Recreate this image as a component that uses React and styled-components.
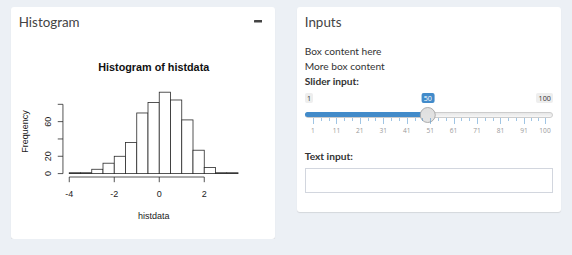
import React from "react";
import styled, { createGlobalStyle } from "styled-components";

const Global = createGlobalStyle`
  html, body { margin: 0; padding: 0; }
  body {
    background: #ecf0f5;
    font-family: Lato, "Open Sans", "Liberation Sans", sans-serif;
    color: #333;
  }
  * { box-sizing: border-box; }
`;

const Page = styled.div`
  display: grid;
  grid-template-columns: 1fr 1fr;
  align-items: start;
  padding-top: 7px;
  width: 572px;
`;

const Column = styled.div`
  padding: 0 11.25px;
`;

const Box = styled.section`
  background: #fff;
  border-radius: 3px;
  box-shadow: 0 1px 1px rgba(0, 0, 0, 0.1);
`;

const BoxHeader = styled.div`
  display: flex;
  align-items: center;
  justify-content: space-between;
  padding: 7.5px;
`;

const BoxTitle = styled.h3`
  margin: 0;
  font-size: 13.4px;
  line-height: 1.1;
  font-weight: 400;
  color: #444;
`;

const ToolButton = styled.button`
  display: flex;
  align-items: center;
  border: 0;
  background: transparent;
  padding: 0 5px 0 0;
  margin: 0;
  cursor: pointer;
`;

const BoxBody = styled.div`
  padding: 7.5px;
`;

const Line = styled.p`
  margin: 0;
  font-size: 10.2px;
  line-height: 15px;
`;

const FieldLabel = styled.label`
  display: block;
  font-size: 10.2px;
  line-height: 15px;
  font-weight: 700;
  margin-bottom: 3.75px;
`;

const FormGroup = styled.div`
  margin-bottom: 11.25px;
`;

const Slider = styled.div`
  display: flex;
  flex-direction: column;
  height: 45px;
  font-family: "Open Sans", "Liberation Sans", sans-serif;
`;

const LabelRow = styled.div`
  position: relative;
  display: flex;
  justify-content: space-between;
  align-items: flex-start;
  height: 10px;
  margin-bottom: 8.75px;
`;

const Tag = styled.span`
  font-size: 7.2px;
  line-height: 10px;
  height: 10px;
  padding: 0 2.3px;
  border-radius: 2px;
  background: #eee;
  color: #333;
  white-space: nowrap;
`;

const FromTag = styled(Tag)`
  position: absolute;
  top: 0;
  transform: translateX(-50%);
  background: #428bca;
  color: #fff;
`;

const TrackLine = styled.div`
  position: relative;
  display: flex;
  height: 6px;
  border-radius: 12px;
  border: 0.75px solid #ccc;
  background: linear-gradient(to bottom, #dedede -50%, #fff 150%);
`;

const Bar = styled.div`
  margin: -0.75px 0 -0.75px -0.75px;
  border-radius: 12px 0 0 12px;
  background: #428bca;
`;

const Handle = styled.div`
  position: absolute;
  top: -6px;
  width: 16.5px;
  height: 16.5px;
  border-radius: 50%;
  border: 0.75px solid #ababab;
  background: linear-gradient(to bottom, #dfdfdf 0%, #e4e4e4 100%);
  transform: translateX(-50%);
`;

const GridRow = styled.div`
  position: relative;
  flex: 1;
`;

const Pol = styled.span`
  position: absolute;
  top: 0;
  width: 1px;
  height: ${(p) => (p.$small ? "3px" : "6px")};
  background: #428bca;
  opacity: 0.5;
`;

const GridText = styled.span`
  position: absolute;
  top: 9.25px;
  font-size: 6.6px;
  line-height: 8px;
  color: #999;
  transform: translateX(-50%);
  white-space: nowrap;
`;

const TextField = styled.input`
  display: block;
  width: 100%;
  height: 25.5px;
  border: 1px solid #d2d6de;
  background: #fff;
  padding: 0 9px;
  font-size: 10.5px;
  outline: none;
`;

const MinusIcon = () => (
  <svg width="8.5" height="3" viewBox="0 0 8.5 3">
    <rect x="0" y="0" width="8.5" height="2.6" rx="0.5" fill="#444" />
  </svg>
);

const counts = [1, 1, 5, 12, 20, 36, 70, 82, 94, 85, 62, 27, 7, 1, 1];

const Histogram = () => {
  const x0 = 159;
  const ux = 22.5;
  const y0 = 174;
  const uy = 0.866;
  const X = (v) => x0 + v * ux;
  const Y = (v) => y0 - v * uy;
  const ink = "#2a2a2a";
  return (
    <svg
      width="248.5"
      height="187"
      viewBox="18.75 44.4 248.5 187"
      style={{ display: "block" }}
      fontFamily="'Liberation Sans', Arial, sans-serif"
    >
      <text x="153.5" y="71.5" fontSize="10.8" fontWeight="700" textAnchor="middle" fill="#111">
        Histogram of histdata
      </text>
      {counts.map((c, i) => {
        const a = -4 + i * 0.5;
        return (
          <rect
            key={i}
            x={X(a)}
            y={Y(c)}
            width={ux / 2}
            height={c * uy}
            fill="#fff"
            stroke={ink}
            strokeWidth="0.8"
          />
        );
      })}
      <line x1={X(-4)} x2={X(2)} y1="177.4" y2="177.4" stroke={ink} strokeWidth="0.8" />
      {[-4, -2, 0, 2].map((v) => (
        <g key={v}>
          <line x1={X(v)} x2={X(v)} y1="177.4" y2="182.6" stroke={ink} strokeWidth="0.8" />
          <text x={X(v)} y="197.2" fontSize="9" textAnchor="middle" fill="#222">
            {v < 0 ? `-${-v}` : v}
          </text>
        </g>
      ))}
      <line x1="62.7" x2="62.7" y1={Y(0)} y2={Y(80)} stroke={ink} strokeWidth="0.8" />
      {[0, 20, 40, 60, 80].map((v) => (
        <line key={v} x1="57.5" x2="62.7" y1={Y(v)} y2={Y(v)} stroke={ink} strokeWidth="0.8" />
      ))}
      {[0, 20, 60].map((v) => (
        <text
          key={v}
          transform={`translate(51.2 ${Y(v)}) rotate(-90)`}
          fontSize="9"
          textAnchor="middle"
          fill="#222"
        >
          {v}
        </text>
      ))}
      <text transform="translate(28.2 132) rotate(-90)" fontSize="9" textAnchor="middle" fill="#222">
        Frequency
      </text>
      <text x="153.5" y="219.2" fontSize="9" textAnchor="middle" fill="#222">
        histdata
      </text>
    </svg>
  );
};

const MIN = 1;
const MAX = 100;
const VALUE = 50;
const HW = 16.5;
const pos = (v) => `calc(${HW / 2}px + (100% - ${HW}px) * ${(v - MIN) / (MAX - MIN)})`;

const majors = [1, 11, 21, 31, 41, 51, 61, 71, 81, 91, 100];

const RangeSlider = () => {
  const smalls = [];
  for (let i = 0; i < majors.length - 1; i++) {
    const a = majors[i];
    const b = majors[i + 1];
    smalls.push(a + (b - a) / 3, a + (2 * (b - a)) / 3);
  }
  return (
    <Slider>
      <LabelRow>
        <Tag>{MIN}</Tag>
        <Tag>{MAX}</Tag>
        <FromTag style={{ left: pos(VALUE) }}>{VALUE}</FromTag>
      </LabelRow>
      <TrackLine>
        <Bar style={{ width: pos(VALUE) }} />
        <Handle style={{ left: pos(VALUE) }} />
      </TrackLine>
      <GridRow>
        {majors.map((m) => (
          <React.Fragment key={m}>
            <Pol style={{ left: pos(m) }} />
            <GridText style={{ left: pos(m) }}>{m}</GridText>
          </React.Fragment>
        ))}
        {smalls.map((s, i) => (
          <Pol key={i} $small style={{ left: pos(s) }} />
        ))}
      </GridRow>
    </Slider>
  );
};

export default function App() {
  return (
    <>
      <Global />
      <Page>
        <Column>
          <Box>
            <BoxHeader>
              <BoxTitle>Histogram</BoxTitle>
              <ToolButton aria-label="collapse">
                <MinusIcon />
              </ToolButton>
            </BoxHeader>
            <BoxBody>
              <Histogram />
            </BoxBody>
          </Box>
        </Column>
        <Column>
          <Box>
            <BoxHeader>
              <BoxTitle>Inputs</BoxTitle>
            </BoxHeader>
            <BoxBody>
              <Line>Box content here</Line>
              <Line>More box content</Line>
              <FormGroup>
                <FieldLabel>Slider input:</FieldLabel>
                <RangeSlider />
              </FormGroup>
              <FormGroup>
                <FieldLabel>Text input:</FieldLabel>
                <TextField type="text" />
              </FormGroup>
            </BoxBody>
          </Box>
        </Column>
      </Page>
    </>
  );
}
